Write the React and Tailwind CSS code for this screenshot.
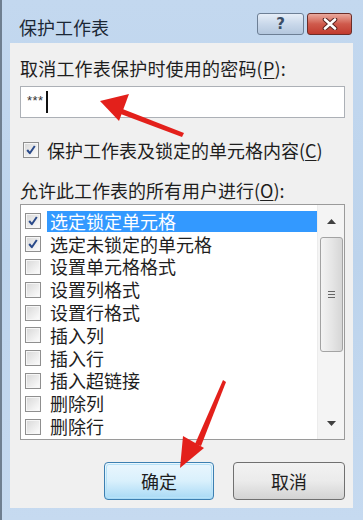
import React from "react";

const CJK = "font-['Noto_Sans_CJK_SC','Noto_Sans',sans-serif]";

function Check({ checked }) {
  return (
    <div className="w-[16px] h-[16px] border border-[#8f8f8f] bg-[#f6f6f6] flex items-center justify-center shrink-0">
      <div className="w-[12px] h-[12px] bg-gradient-to-br from-[#dadada] to-[#fbfbfb] flex items-center justify-center">
        {checked && (
          <svg width="12" height="12" viewBox="0 0 12 12">
            <path d="M2.2 6 L4.8 9.2 L9.8 2" stroke="#2a4a8a" strokeWidth="2" fill="none" strokeLinejoin="round" />
          </svg>
        )}
      </div>
    </div>
  );
}

const rows = [
  ["选定锁定单元格", true, true],
  ["选定未锁定的单元格", true, false],
  ["设置单元格格式", false, false],
  ["设置列格式", false, false],
  ["设置行格式", false, false],
  ["插入列", false, false],
  ["插入行", false, false],
  ["插入超链接", false, false],
  ["删除列", false, false],
  ["删除行", false, false],
];

export default function App() {
  return (
    <div className={`relative w-[363px] h-[520px] overflow-hidden bg-gradient-to-b from-[#c3d8ef] via-[#bcd3ec] to-[#c6daf0] border-l-2 border-[#6f7f90] ${CJK}`}>
      {/* Title bar */}
      <div className="h-[43px] flex items-start pl-[17px] pr-[11px]">
        <div className="text-[18px] text-[#1c2836] leading-none mt-[18px]">保护工作表</div>
        <div className="ml-auto flex items-start gap-[3px] mt-[13px]">
          <div className="w-[47px] h-[22px] rounded-[3px] border border-[#6d7f95] bg-gradient-to-b from-[#e6eef8] via-[#c9d8ea] to-[#b4c7de] flex items-center justify-center">
            <span className="text-[15px] font-bold text-[#3b4e66] leading-none font-['DejaVu_Sans',sans-serif]">?</span>
          </div>
          <div className="w-[45px] h-[22px] rounded-[3px] border border-[#6b2d28] bg-gradient-to-b from-[#e9a99e] via-[#cf5a4c] to-[#c13a2e] flex items-center justify-center">
            <svg width="16" height="12" viewBox="0 0 16 12">
              <path d="M3 1.5 L13 10.5 M13 1.5 L3 10.5" stroke="#5a2420" strokeWidth="4.6" strokeLinecap="round" />
              <path d="M3 1.5 L13 10.5 M13 1.5 L3 10.5" stroke="#ffffff" strokeWidth="2.6" strokeLinecap="round" />
            </svg>
          </div>
        </div>
      </div>

      {/* Content */}
      <div className="ml-[8px] mr-[10px] h-[465px] bg-[#f0f0f0] pl-[10px] pr-[8px] flex flex-col text-[#1e1e1e]">
        <div className="mt-[13px] h-[24px] leading-[24px] text-[18px] tracking-[0.2px]">
          取消工作表保护时使用的密码(<span className="underline underline-offset-2">P</span>):
        </div>
        <div className="mt-[6px] h-[32px] border border-[#acb0b6] bg-white flex items-center pl-[6px]">
          <span className="text-[13px] text-[#333] font-['Liberation_Sans',sans-serif] leading-none mb-[3px] tracking-[0.5px]">***</span>
          <div className="w-[2px] h-[22px] bg-[#111] ml-[2px]" />
        </div>
        <div className="mt-[20px] h-[24px] flex items-center">
          <div className="ml-[3px]"><Check checked /></div>
          <div className="ml-[8px] text-[18px] leading-[24px]">
            保护工作表及锁定的单元格内容(<span className="underline underline-offset-2">C</span>)
          </div>
        </div>
        <div className="mt-[16px] h-[24px] leading-[24px] text-[18px]">
          允许此工作表的所有用户进行(<span className="underline underline-offset-2">O</span>):
        </div>
        <div className="mt-[2px] h-[236px] border border-[#9a9a9a] bg-white flex overflow-hidden">
          <div className="flex-1 pt-[5px] overflow-hidden">
            {rows.map(([t, c, sel]) => (
              <div key={t} className="h-[22.8px] flex items-center pl-[4px]">
                <Check checked={c} />
                <div className={`ml-[6px] h-[21px] flex-1 flex items-center pl-[3px] text-[18px] leading-[21px] ${sel ? "bg-[#3399ff] text-white" : ""}`}>
                  {t}
                </div>
              </div>
            ))}
          </div>
          <div className="w-[27px] flex flex-col items-center bg-[#f4f4f4] border-l border-[#ececec]">
            <div className="h-[32px] flex items-center justify-center">
              <svg width="9" height="5" viewBox="0 0 9 5"><path d="M0 5 L4.5 0 L9 5 Z" fill="#404040" /></svg>
            </div>
            <div className="w-[23px] h-[115px] rounded-[3px] border border-[#a3a3a3] bg-gradient-to-r from-[#f4f4f4] via-[#e6e6e6] to-[#d6d6d6] flex items-center justify-center">
              <div className="flex flex-col gap-[2px]">
                <div className="w-[7px] h-[1px] bg-[#666]" />
                <div className="w-[7px] h-[1px] bg-[#666]" />
                <div className="w-[7px] h-[1px] bg-[#666]" />
              </div>
            </div>
            <div className="flex-1" />
            <div className="h-[28px] flex items-center justify-center mb-[2px]">
              <svg width="9" height="5" viewBox="0 0 9 5"><path d="M0 0 L4.5 5 L9 0 Z" fill="#404040" /></svg>
            </div>
          </div>
        </div>
        <div className="mt-[22px] h-[38px] flex justify-end gap-[19px]">
          <div className="w-[110px] h-[38px] rounded-[4px] border border-[#3c7fb1] bg-gradient-to-b from-[#eaf6fd] via-[#d9f0fc] to-[#a7d9f5] p-[1px]">
            <div className="w-full h-full rounded-[3px] border border-[#b6e2f8] flex items-center justify-center text-[18px] text-[#1e1e1e]">确定</div>
          </div>
          <div className="w-[112px] h-[38px] rounded-[4px] border border-[#707070] bg-gradient-to-b from-[#f2f2f2] via-[#ebebeb] to-[#d3d3d3] flex items-center justify-center text-[18px] text-[#1e1e1e]">
            取消
          </div>
        </div>
      </div>

      {/* Red annotation arrows */}
      <svg className="absolute left-0 top-0 pointer-events-none" width="363" height="520" viewBox="0 0 363 520">
        <polygon points="182,133 180,137 116,113 118,108" fill="#e3201b" />
        <polygon points="98,101 127,94 117,121" fill="#e3201b" />
        <polygon points="221,380 224,382 199,446 193,444" fill="#e3201b" />
        <polygon points="178,468 181,436 202,448" fill="#e3201b" />
      </svg>
    </div>
  );
}
